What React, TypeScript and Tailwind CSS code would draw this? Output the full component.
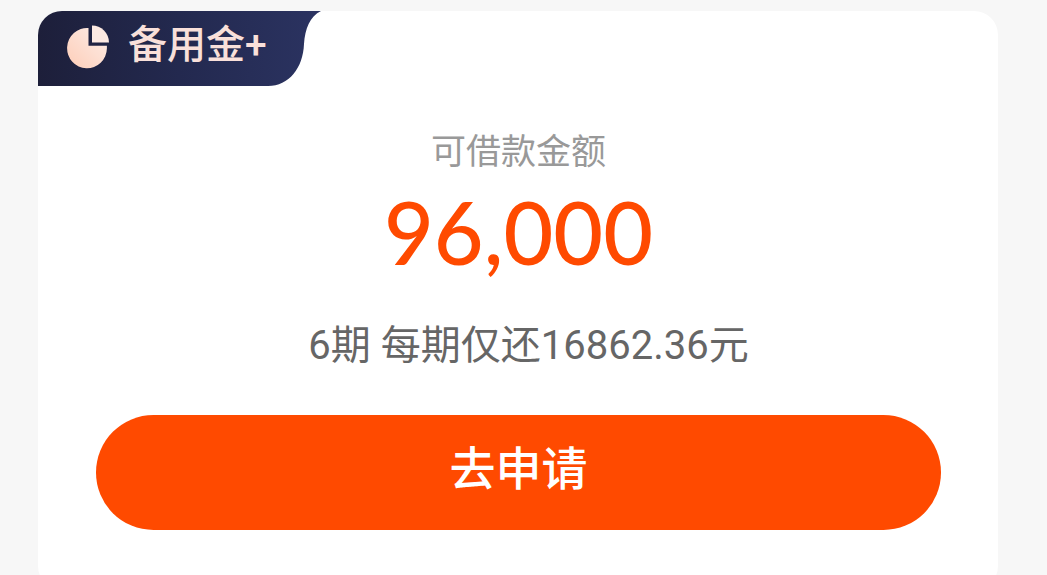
import React from 'react';

function PieIcon() {
  return (
    <svg viewBox="0 0 44 44" className="h-11 w-11 shrink-0" aria-hidden="true">
      <defs>
        <linearGradient id="pie-fill" x1="0" y1="1" x2="1" y2="0">
          <stop offset="0" stopColor="#fdcdb8" />
          <stop offset="1" stopColor="#fdeee8" />
        </linearGradient>
      </defs>
      <path
        d="M22.5 3 V20.8 H40.9 V23.5 A19.9 20.2 0 1 1 22.5 3 Z"
        fill="url(#pie-fill)"
      />
      <path d="M26 0.4 A17 17 0 0 1 43 17.4 H26 Z" fill="#fdeae2" />
    </svg>
  );
}

function ProductTab() {
  return (
    <header className="relative h-[75px] w-[285px]">
      <svg
        viewBox="0 0 285 75"
        className="absolute inset-0 h-full w-full"
        preserveAspectRatio="none"
        aria-hidden="true"
      >
        <defs>
          <linearGradient id="tab-fill" x1="0" y1="0" x2="1" y2="0">
            <stop offset="0" stopColor="#1d1f3a" />
            <stop offset="0.5" stopColor="#23294f" />
            <stop offset="1" stopColor="#2b3361" />
          </linearGradient>
        </defs>
        <path
          d="M0 0 H283 C272 5 267 18 266 33 C265 57 251 75 230 75 H0 Z"
          fill="url(#tab-fill)"
        />
      </svg>
      <div className="relative flex items-start gap-[18px] pt-2 pl-7">
        <div className="pt-1.5">
          <PieIcon />
        </div>
        <h1 className="whitespace-nowrap font-['Roboto','Noto_Sans_CJK_SC',sans-serif] text-[39px] leading-[52px] font-medium text-[#f9e0da]">
          备用金+
        </h1>
      </div>
    </header>
  );
}

export default function App() {
  return (
    <main
      lang="zh-CN"
      className="h-screen overflow-hidden bg-[#f7f7f7] pt-[11px] pr-[49px] pl-[38px] font-['Roboto','Noto_Sans_CJK_SC',sans-serif]"
    >
      <section className="overflow-hidden rounded-3xl bg-white">
        <ProductTab />
        <div className="flex flex-col pt-[39px] pr-[57px] pb-15 pl-[58px] text-center">
          <p className="text-[35px] leading-[48px] text-[#999999] font-['Noto_Sans_CJK_SC',sans-serif]">
            可借款金额
          </p>
          <p className="mt-[11px] font-['Lato',sans-serif] text-[86px] leading-[96px] font-medium text-[#ff4a00]">
            96,000
          </p>
          <p className="mt-[38px] pl-5 text-[40px] leading-[56px] text-[#666666]">
            6期 每期仅还16862.36元
          </p>
          <button
            type="button"
            className="mt-[41px] h-[115px] w-full cursor-pointer rounded-full bg-[#ff4a00] pb-2 text-[46px] leading-[64px] font-medium text-white"
          >
            去申请
          </button>
        </div>
      </section>
    </main>
  );
}
